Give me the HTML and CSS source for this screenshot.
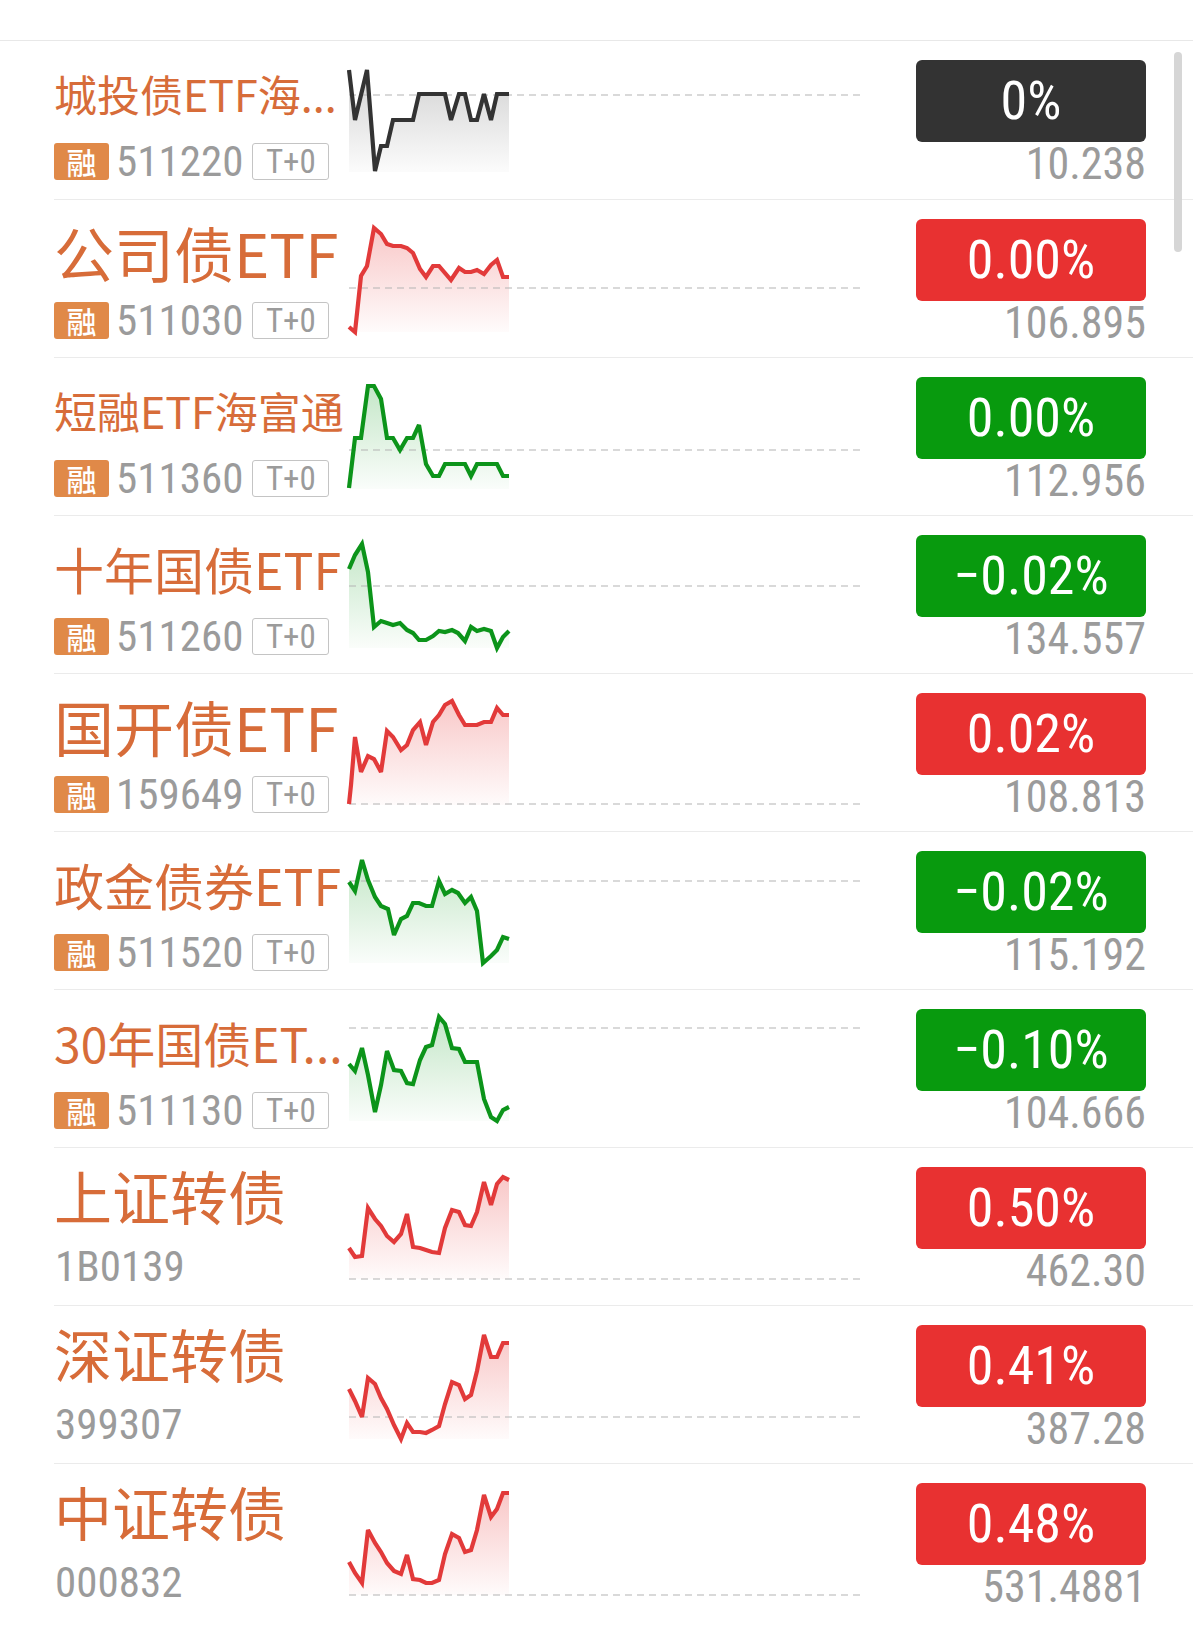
FILE: index.html
```html
<!DOCTYPE html>
<html lang="zh-CN">
<head>
    <meta charset="UTF-8">
    <title>债券ETF</title>
    <link rel="stylesheet" href="styles.css">
</head>
<body>
    <!-- 渐变定义 -->
    <svg class="defs" width="0" height="0">
        <defs>
            <linearGradient id="fill-flat" x1="0" y1="0" x2="0" y2="1">
                <stop offset="0" stop-color="#8a8a8a" stop-opacity="0.38"/>
                <stop offset="1" stop-color="#8a8a8a" stop-opacity="0.03"/>
            </linearGradient>
            <linearGradient id="fill-up" x1="0" y1="0" x2="0" y2="1">
                <stop offset="0" stop-color="#e83a3a" stop-opacity="0.28"/>
                <stop offset="1" stop-color="#e83a3a" stop-opacity="0.02"/>
            </linearGradient>
            <linearGradient id="fill-down" x1="0" y1="0" x2="0" y2="1">
                <stop offset="0" stop-color="#0b9a1a" stop-opacity="0.24"/>
                <stop offset="1" stop-color="#0b9a1a" stop-opacity="0.02"/>
            </linearGradient>
        </defs>
    </svg>

    <div class="topbar"></div>

    <div class="list">
        <!-- 城投债 -->
        <div class="row">
            <div class="info">
                <div class="name name-s">城投债ETF海...</div>
                <div class="meta"><span class="tag-rong">融</span><span class="code">511220</span><span class="tag-t0">T+0</span></div>
            </div>
            <svg class="spark flat" viewBox="0 0 515 158" width="515" height="158">
                <polygon class="area" points="4,29 10,79 22,29 30,130 36,105 42,105 48,79 68,79 74,53 100,53 106,79 114,53 120,53 126,79 132,79 139,53 146,79 152,53 164,53 164,131 4,131"/>
                <line class="base" x1="4" y1="54" x2="515" y2="54"/>
                <polyline class="line" points="4,29 10,79 22,29 30,130 36,105 42,105 48,79 68,79 74,53 100,53 106,79 114,53 120,53 126,79 132,79 139,53 146,79 152,53 164,53"/>
            </svg>
            <div class="quote">
                <div class="chg flat">0%</div>
                <div class="price">10.238</div>
            </div>
        </div>

        <!-- 公司债 -->
        <div class="row">
            <div class="info">
                <div class="name name-xl">公司债ETF</div>
                <div class="meta"><span class="tag-rong">融</span><span class="code">511030</span><span class="tag-t0">T+0</span></div>
            </div>
            <svg class="spark up" viewBox="0 0 515 158" width="515" height="158">
                <polygon class="area" points="4,127 10,132 16,76 22,66 29,28 36,34 42,44 48,46 56,46 62,48 68,53 75,69 81,77 88,66 94,66 106,80 114,68 120,72 126,72 132,70 139,74 146,65 152,60 158,77 164,77 164,132 4,132"/>
                <line class="base" x1="4" y1="88" x2="515" y2="88"/>
                <polyline class="line" points="4,127 10,132 16,76 22,66 29,28 36,34 42,44 48,46 56,46 62,48 68,53 75,69 81,77 88,66 94,66 106,80 114,68 120,72 126,72 132,70 139,74 146,65 152,60 158,77 164,77"/>
            </svg>
            <div class="quote">
                <div class="chg up">0.00%</div>
                <div class="price">106.895</div>
            </div>
        </div>

        <!-- 短融 -->
        <div class="row">
            <div class="info">
                <div class="name name-s">短融ETF海富通</div>
                <div class="meta"><span class="tag-rong">融</span><span class="code">511360</span><span class="tag-t0">T+0</span></div>
            </div>
            <svg class="spark down" viewBox="0 0 515 158" width="515" height="158">
                <polygon class="area" points="4,130 10,80 16,80 23,28 29,28 36,41 42,80 48,80 55,92 62,80 68,80 74,67 81,106 88,118 94,118 100,106 120,106 126,118 132,106 152,106 158,118 164,118 164,131 4,131"/>
                <line class="base" x1="4" y1="92" x2="515" y2="92"/>
                <polyline class="line" points="4,130 10,80 16,80 23,28 29,28 36,41 42,80 48,80 55,92 62,80 68,80 74,67 81,106 88,118 94,118 100,106 120,106 126,118 132,106 152,106 158,118 164,118"/>
            </svg>
            <div class="quote">
                <div class="chg down">0.00%</div>
                <div class="price">112.956</div>
            </div>
        </div>

        <!-- 十年国债 -->
        <div class="row">
            <div class="info">
                <div class="name name-m">十年国债ETF</div>
                <div class="meta"><span class="tag-rong">融</span><span class="code">511260</span><span class="tag-t0">T+0</span></div>
            </div>
            <svg class="spark down" viewBox="0 0 515 158" width="515" height="158">
                <polygon class="area" points="4,53 10,39 17,28 23,56 29,111 36,105 42,107 48,109 55,107 62,114 68,117 74,124 81,124 88,120 94,115 100,116 107,114 113,117 120,125 126,111 132,115 139,113 146,115 152,132 158,121 164,115 164,132 4,132"/>
                <line class="base" x1="4" y1="70" x2="515" y2="70"/>
                <polyline class="line" points="4,53 10,39 17,28 23,56 29,111 36,105 42,107 48,109 55,107 62,114 68,117 74,124 81,124 88,120 94,115 100,116 107,114 113,117 120,125 126,111 132,115 139,113 146,115 152,132 158,121 164,115"/>
            </svg>
            <div class="quote">
                <div class="chg down">−0.02%</div>
                <div class="price">134.557</div>
            </div>
        </div>

        <!-- 国开债 -->
        <div class="row">
            <div class="info">
                <div class="name name-xl">国开债ETF</div>
                <div class="meta"><span class="tag-rong">融</span><span class="code">159649</span><span class="tag-t0">T+0</span></div>
            </div>
            <svg class="spark up" viewBox="0 0 515 158" width="515" height="158">
                <polygon class="area" points="4,130 6,111 10,63 16,98 23,82 29,85 36,98 42,57 48,63 56,76 62,71 68,56 75,48 81,71 88,48 94,41 100,31 107,27 114,41 120,51 132,51 139,48 146,48 152,34 158,41 164,41 164,131 4,131"/>
                <line class="base" x1="4" y1="130" x2="515" y2="130"/>
                <polyline class="line" points="4,130 6,111 10,63 16,98 23,82 29,85 36,98 42,57 48,63 56,76 62,71 68,56 75,48 81,71 88,48 94,41 100,31 107,27 114,41 120,51 132,51 139,48 146,48 152,34 158,41 164,41"/>
            </svg>
            <div class="quote">
                <div class="chg up">0.02%</div>
                <div class="price">108.813</div>
            </div>
        </div>

        <!-- 政金债券 -->
        <div class="row">
            <div class="info">
                <div class="name name-m">政金债券ETF</div>
                <div class="meta"><span class="tag-rong">融</span><span class="code">511520</span><span class="tag-t0">T+0</span></div>
            </div>
            <svg class="spark down" viewBox="0 0 515 158" width="515" height="158">
                <polygon class="area" points="4,50 10,59 17,28 23,48 30,65 36,74 43,77 49,103 56,87 62,84 68,71 74,71 81,74 87,74 94,49 100,62 107,58 113,61 120,71 126,65 132,79 138,131 146,124 152,118 158,105 164,107 164,131 4,131"/>
                <line class="base" x1="4" y1="49" x2="515" y2="49"/>
                <polyline class="line" points="4,50 10,59 17,28 23,48 30,65 36,74 43,77 49,103 56,87 62,84 68,71 74,71 81,74 87,74 94,49 100,62 107,58 113,61 120,71 126,65 132,79 138,131 146,124 152,118 158,105 164,107"/>
            </svg>
            <div class="quote">
                <div class="chg down">−0.02%</div>
                <div class="price">115.192</div>
            </div>
        </div>

        <!-- 30年国债 -->
        <div class="row">
            <div class="info">
                <div class="name name-ms">30年国债ET...</div>
                <div class="meta"><span class="tag-rong">融</span><span class="code">511130</span><span class="tag-t0">T+0</span></div>
            </div>
            <svg class="spark down" viewBox="0 0 515 158" width="515" height="158">
                <polygon class="area" points="4,74 10,81 17,58 23,85 30,122 36,95 42,61 49,80 56,81 62,93 68,94 75,70 81,57 87,55 94,27 100,34 107,58 114,59 120,72 132,72 139,109 146,127 152,131 158,120 164,117 164,131 4,131"/>
                <line class="base" x1="4" y1="38" x2="515" y2="38"/>
                <polyline class="line" points="4,74 10,81 17,58 23,85 30,122 36,95 42,61 49,80 56,81 62,93 68,94 75,70 81,57 87,55 94,27 100,34 107,58 114,59 120,72 132,72 139,109 146,127 152,131 158,120 164,117"/>
            </svg>
            <div class="quote">
                <div class="chg down">−0.10%</div>
                <div class="price">104.666</div>
            </div>
        </div>

        <!-- 上证转债 -->
        <div class="row">
            <div class="info plain">
                <div class="name name-l">上证转债</div>
                <div class="meta"><span class="code">1B0139</span></div>
            </div>
            <svg class="spark up" viewBox="0 0 515 158" width="515" height="158">
                <polygon class="area" points="4,100 10,109 17,108 23,60 30,71 36,78 42,88 49,94 56,86 62,66 68,99 75,100 81,102 87,104 94,105 100,80 107,62 114,64 120,77 126,78 132,64 139,34 146,57 152,36 158,29 164,32 164,131 4,131"/>
                <line class="base" x1="4" y1="131" x2="515" y2="131"/>
                <polyline class="line" points="4,100 10,109 17,108 23,60 30,71 36,78 42,88 49,94 56,86 62,66 68,99 75,100 81,102 87,104 94,105 100,80 107,62 114,64 120,77 126,78 132,64 139,34 146,57 152,36 158,29 164,32"/>
            </svg>
            <div class="quote">
                <div class="chg up">0.50%</div>
                <div class="price">462.30</div>
            </div>
        </div>

        <!-- 深证转债 -->
        <div class="row">
            <div class="info plain">
                <div class="name name-l">深证转债</div>
                <div class="meta"><span class="code">399307</span></div>
            </div>
            <svg class="spark up" viewBox="0 0 515 158" width="515" height="158">
                <polygon class="area" points="4,83 10,95 17,111 23,72 30,78 36,92 42,103 49,119 56,133 62,117 68,126 75,126 81,127 87,124 94,120 100,98 107,76 114,79 120,93 126,89 132,65 139,29 146,51 152,51 158,37 164,37 164,133 4,133"/>
                <line class="base" x1="4" y1="111" x2="515" y2="111"/>
                <polyline class="line" points="4,83 10,95 17,111 23,72 30,78 36,92 42,103 49,119 56,133 62,117 68,126 75,126 81,127 87,124 94,120 100,98 107,76 114,79 120,93 126,89 132,65 139,29 146,51 152,51 158,37 164,37"/>
            </svg>
            <div class="quote">
                <div class="chg up">0.41%</div>
                <div class="price">387.28</div>
            </div>
        </div>

        <!-- 中证转债 -->
        <div class="row">
            <div class="info plain">
                <div class="name name-l">中证转债</div>
                <div class="meta"><span class="code">000832</span></div>
            </div>
            <svg class="spark up" viewBox="0 0 515 158" width="515" height="158">
                <polygon class="area" points="4,98 10,109 17,119 23,66 30,79 36,88 42,99 49,107 56,110 62,91 68,115 75,116 81,119 87,119 94,116 100,90 107,70 114,74 120,88 126,86 132,66 139,31 146,53 152,45 158,29 164,29 164,131 4,131"/>
                <line class="base" x1="4" y1="131" x2="515" y2="131"/>
                <polyline class="line" points="4,98 10,109 17,119 23,66 30,79 36,88 42,99 49,107 56,110 62,91 68,115 75,116 81,119 87,119 94,116 100,90 107,70 114,74 120,88 126,86 132,66 139,31 146,53 152,45 158,29 164,29"/>
            </svg>
            <div class="quote">
                <div class="chg up">0.48%</div>
                <div class="price">531.4881</div>
            </div>
        </div>
    </div>

    <div class="scrollbar"></div>
</body>
</html>
```

FILE: styles.css
```css
body {
    margin: 0;
    padding: 0;
    background: #ffffff;
    font-family: 'Noto Sans CJK SC', 'Noto Sans', sans-serif;
    position: relative;
}

.defs {
    display: block;
    width: 0;
    height: 0;
}

.topbar {
    height: 40px;
    border-bottom: 1px solid #e8e8e8;
}

.row {
    display: flex;
    height: 158px;
    margin-left: 54px;
    padding-right: 47px;
    box-sizing: border-box;
    border-top: 1px solid #ebebeb;
}

.row:first-child {
    border-top: none;
}

.info {
    width: 291px;
    flex-shrink: 0;
    padding-top: 20px;
    box-sizing: border-box;
}

.info.plain {
    padding-top: 15px;
}

.name {
    height: 64px;
    line-height: 64px;
    color: #d76c39;
    white-space: nowrap;
}

.name-s { font-size: 43px; }
.name-ms { font-size: 48px; }
.name-m { font-size: 50px; }
.name-l { font-size: 58px; }
.name-xl { font-size: 60px; }

.meta {
    display: flex;
    align-items: center;
    height: 37px;
    margin-top: 18px;
}

.plain .meta {
    margin-top: 21px;
}

.tag-rong {
    width: 55px;
    height: 37px;
    border-radius: 3px;
    background: #e08948;
    color: #ffffff;
    font-size: 30px;
    font-weight: 500;
    line-height: 37px;
    text-align: center;
}

.code {
    margin-left: 7px;
    font-family: 'Roboto Condensed', 'Roboto', sans-serif;
    font-stretch: condensed;
    font-size: 43px;
    line-height: 37px;
    color: #9b9b9b;
}

.plain .code {
    margin-left: 1px;
}

.tag-t0 {
    margin-left: 9px;
    width: 77px;
    height: 37px;
    box-sizing: border-box;
    border: 1px solid #c4c4c4;
    border-radius: 3px;
    font-family: 'Roboto Condensed', 'Roboto', sans-serif;
    font-stretch: condensed;
    font-size: 33px;
    line-height: 35px;
    color: #9b9b9b;
    text-align: center;
}

.spark {
    flex-shrink: 0;
    display: block;
    overflow: visible;
}

.spark .base {
    stroke: #b3b3b3;
    stroke-width: 1.2;
    stroke-dasharray: 7 5;
}

.spark .line {
    fill: none;
    stroke-width: 4.2;
    stroke-linejoin: miter;
    stroke-miterlimit: 3;
}

.spark.flat .line { stroke: #333333; }
.spark.flat .area { fill: url(#fill-flat); }
.spark.up .line { stroke: #e23a3a; }
.spark.up .area { fill: url(#fill-up); }
.spark.down .line { stroke: #0c941a; }
.spark.down .area { fill: url(#fill-down); }

.quote {
    margin-left: auto;
    width: 230px;
    padding-top: 19px;
}

.chg {
    height: 82px;
    border-radius: 6px;
    color: #ffffff;
    font-family: 'Roboto Condensed', 'Roboto', sans-serif;
    font-stretch: condensed;
    font-size: 54px;
    line-height: 82px;
    text-align: center;
}

.chg.flat { background: #333333; }
.chg.up { background: #e83131; }
.chg.down { background: #089a0e; }

.price {
    font-family: 'Roboto Condensed', 'Roboto', sans-serif;
    font-stretch: condensed;
    font-size: 44px;
    line-height: 44px;
    color: #9b9b9b;
    text-align: right;
}

/* 滚动条 */
.scrollbar {
    position: absolute;
    top: 52px;
    left: 1174px;
    width: 8px;
    height: 200px;
    border-radius: 4px;
    background: #d6d6d6;
}
```
